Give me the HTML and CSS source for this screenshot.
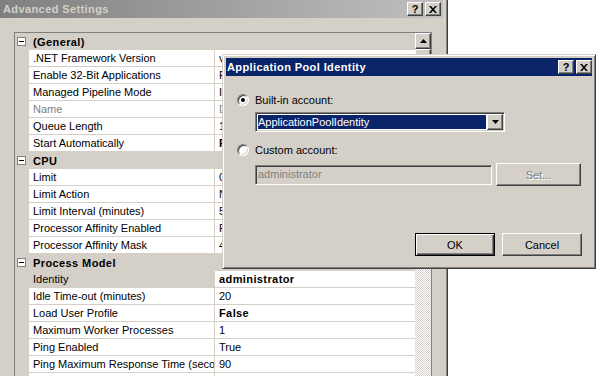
FILE: index.html
```html
<!DOCTYPE html>
<html lang="en">

<head>
    <meta charset="UTF-8">
    <title>Advanced Settings</title>
    <link rel="stylesheet" href="styles.css">
</head>

<body>
    <div class="adv">
        <div class="caption inactive">
            <span class="caption-text">Advanced Settings</span>
            <div class="caption-btns">
                <span class="cbtn">?</span>
                <span class="cbtn">
                    <svg width="8" height="7" viewBox="0 0 8 7"><path d="M0 0h2l2 2.2L6 0h2L5 3.5 8 7H6L4 4.8 2 7H0l3-3.5z" fill="#000"/></svg>
                </span>
            </div>
        </div>
        <div class="adv-body">
            <div class="grid">
                <div class="rows">
                    <div class="row cat"><span class="gutter"><span class="expander"></span></span><span class="name">(General)</span></div>
                    <div class="row"><span class="gutter"></span><span class="name">.NET Framework Version</span><span class="value">v4.0</span></div>
                    <div class="row"><span class="gutter"></span><span class="name">Enable 32-Bit Applications</span><span class="value">False</span></div>
                    <div class="row"><span class="gutter"></span><span class="name">Managed Pipeline Mode</span><span class="value">Integrated</span></div>
                    <div class="row"><span class="gutter"></span><span class="name ro">Name</span><span class="value ro">DefaultAppPool</span></div>
                    <div class="row"><span class="gutter"></span><span class="name">Queue Length</span><span class="value">1000</span></div>
                    <div class="row"><span class="gutter"></span><span class="name">Start Automatically</span><span class="value changed">False</span></div>

                    <div class="row cat"><span class="gutter"><span class="expander"></span></span><span class="name">CPU</span></div>
                    <div class="row"><span class="gutter"></span><span class="name">Limit</span><span class="value">0</span></div>
                    <div class="row"><span class="gutter"></span><span class="name">Limit Action</span><span class="value">NoAction</span></div>
                    <div class="row"><span class="gutter"></span><span class="name">Limit Interval (minutes)</span><span class="value">5</span></div>
                    <div class="row"><span class="gutter"></span><span class="name">Processor Affinity Enabled</span><span class="value">False</span></div>
                    <div class="row"><span class="gutter"></span><span class="name">Processor Affinity Mask</span><span class="value">4294967295</span></div>

                    <div class="row cat"><span class="gutter"><span class="expander"></span></span><span class="name">Process Model</span></div>
                    <div class="row sel"><span class="gutter"></span><span class="name">Identity</span><span class="value changed">administrator</span></div>
                    <div class="row"><span class="gutter"></span><span class="name">Idle Time-out (minutes)</span><span class="value">20</span></div>
                    <div class="row"><span class="gutter"></span><span class="name">Load User Profile</span><span class="value changed">False</span></div>
                    <div class="row"><span class="gutter"></span><span class="name">Maximum Worker Processes</span><span class="value">1</span></div>
                    <div class="row"><span class="gutter"></span><span class="name">Ping Enabled</span><span class="value">True</span></div>
                    <div class="row"><span class="gutter"></span><span class="name">Ping Maximum Response Time (seconds)</span><span class="value">90</span></div>
                    <div class="row"><span class="gutter"></span><span class="name"></span><span class="value"></span></div>
                </div>
                <div class="vscroll">
                    <span class="sbtn">
                        <svg width="7" height="4" viewBox="0 0 7 4"><path d="M0 4h7L3.5 0z" fill="#000"/></svg>
                    </span>
                    <span class="thumb"></span>
                </div>
            </div>
        </div>
    </div>

    <div class="dialog">
        <div class="caption active">
            <span class="caption-text">Application Pool Identity</span>
            <div class="caption-btns">
                <span class="cbtn">?</span>
                <span class="cbtn">
                    <svg width="8" height="7" viewBox="0 0 8 7"><path d="M0 0h2l2 2.2L6 0h2L5 3.5 8 7H6L4 4.8 2 7H0l3-3.5z" fill="#000"/></svg>
                </span>
            </div>
        </div>
        <div class="dialog-body">
            <div class="opt">
                <span class="radio on"></span>
                <span>Built-in account:</span>
            </div>
            <div class="combo">
                <span class="combo-sel">ApplicationPoolIdentity</span>
                <span class="dropbtn">
                    <svg width="7" height="4" viewBox="0 0 7 4"><path d="M0 0h7L3.5 4z" fill="#000"/></svg>
                </span>
            </div>
            <div class="opt second">
                <span class="radio"></span>
                <span>Custom account:</span>
            </div>
            <div class="custom">
                <span class="textbox">administrator</span>
                <span class="btn set disabled">Set...</span>
            </div>
            <div class="actions">
                <span class="btn default">OK</span>
                <span class="btn">Cancel</span>
            </div>
        </div>
    </div>
</body>

</html>
```

FILE: styles.css
```css
body {
    margin: 0;
    height: 376px;
    overflow: hidden;
    position: relative;
    background-color: #fff;
    font-family: "Liberation Sans", Arial, sans-serif;
    font-size: 11px;
    color: #000;
}

/* outer property window */
.adv {
    width: 447px;
    height: 376px;
    background-color: #d4d0c8;
    border-right: 1px solid #404040;
    box-shadow: inset -1px 0 #808080;
}

.caption {
    display: flex;
    align-items: center;
    justify-content: space-between;
    height: 18px;
    padding: 0 2px 0 3px;
}

.adv .caption {
    margin-right: 4px;
}

.caption.inactive {
    background: linear-gradient(to right, #808080, #c0c0c0);
    color: #d4d0c8;
}

.caption.active {
    background-color: #0a246a;
    color: #fff;
    padding: 0 0 0 1px;
}

.caption-text {
    font-weight: bold;
    letter-spacing: 0.4px;
    white-space: nowrap;
}

.caption-btns {
    display: flex;
    gap: 2px;
}

.cbtn {
    width: 16px;
    height: 14px;
    box-sizing: border-box;
    display: flex;
    align-items: center;
    justify-content: center;
    background-color: #d4d0c8;
    color: #000;
    font-weight: bold;
    font-size: 11px;
    border: 1px solid;
    border-color: #fff #404040 #404040 #fff;
    box-shadow: inset -1px -1px #808080;
}

.adv-body {
    padding: 14px 0 0 14px;
}

/* property grid */
.grid {
    display: flex;
    width: 416px;
    height: 360px;
    overflow: hidden;
    border: 1px solid #808080;
}

.rows {
    width: 400px;
}

.row {
    display: flex;
    height: 17px;
}

.gutter {
    width: 14px;
    flex: none;
    box-sizing: border-box;
    padding-left: 2px;
    display: flex;
    align-items: center;
    background-color: #d4d0c8;
}

.expander {
    width: 9px;
    height: 9px;
    box-sizing: border-box;
    border: 1px solid #808080;
    background-color: #fff;
    display: flex;
    align-items: center;
    justify-content: center;
}

.expander::after {
    content: "";
    width: 5px;
    height: 1px;
    background-color: #000;
}

.name,
.value {
    box-sizing: border-box;
    padding-left: 4px;
    padding-top: 1px;
    line-height: 15px;
    white-space: nowrap;
    overflow: hidden;
    background-color: #fff;
    border-bottom: 1px solid #d4d0c8;
}

.name {
    width: 186px;
    flex: none;
    border-right: 1px solid #d4d0c8;
}

.value {
    flex: 1;
}

.ro {
    color: #808080;
}

.changed {
    font-weight: bold;
    letter-spacing: 0.4px;
}

.row.sel .name {
    background-color: #d4d0c8;
}

.row.cat .name {
    flex: 1;
    border: none;
    line-height: 16px;
    background-color: #d4d0c8;
    font-weight: bold;
    letter-spacing: 0.4px;
}

.vscroll {
    width: 16px;
    flex: none;
    display: flex;
    flex-direction: column;
    background: repeating-conic-gradient(#fff 0 25%, #d4d0c8 0 50%) 0 0 / 2px 2px;
}

.sbtn,
.thumb,
.dropbtn,
.btn {
    box-sizing: border-box;
    background-color: #d4d0c8;
    border: 1px solid;
    border-color: #fff #404040 #404040 #fff;
    box-shadow: inset -1px -1px #808080;
}

.sbtn {
    height: 16px;
    display: flex;
    align-items: center;
    justify-content: center;
}

.thumb {
    height: 150px;
}

/* identity dialog */
.dialog {
    position: absolute;
    left: 222px;
    top: 54px;
    width: 374px;
    height: 215px;
    box-sizing: border-box;
    padding: 3px;
    background-color: #d4d0c8;
    border: 1px solid;
    border-color: #d4d0c8 #404040 #404040 #d4d0c8;
    box-shadow: inset 1px 1px #fff, inset -1px -1px #808080;
}

.dialog-body {
    padding: 17px 10px 0 11px;
}

.opt {
    display: flex;
    align-items: center;
    gap: 6px;
    height: 14px;
}

.opt.second {
    margin-top: 11px;
}

.radio {
    width: 12px;
    height: 12px;
    box-sizing: border-box;
    border-radius: 50%;
    background-color: #fff;
    border: 1px solid;
    border-color: #808080 #fff #fff #808080;
    box-shadow: inset 1px 1px #404040, inset -1px -1px #d4d0c8;
    display: flex;
    align-items: center;
    justify-content: center;
}

.radio.on::after {
    content: "";
    width: 4px;
    height: 4px;
    border-radius: 50%;
    background-color: #000;
}

.combo,
.textbox {
    box-sizing: border-box;
    height: 20px;
    border: 1px solid;
    border-color: #808080 #fff #fff #808080;
    box-shadow: inset 1px 1px #404040, inset -1px -1px #d4d0c8;
}

.combo {
    display: flex;
    width: 250px;
    margin: 5px 0 0 18px;
    padding: 1px;
    background-color: #fff;
}

.combo-sel {
    flex: 1;
    margin: 1px;
    line-height: 14px;
    background-color: #0a246a;
    color: #fff;
}

.dropbtn {
    width: 16px;
    height: 16px;
    display: flex;
    align-items: center;
    justify-content: center;
}

.custom {
    display: flex;
    align-items: center;
    gap: 4px;
    height: 23px;
    margin: 6px 0 0 18px;
}

.textbox {
    width: 237px;
    padding-left: 2px;
    line-height: 16px;
    background-color: #d4d0c8;
    color: #808080;
}

.btn {
    width: 80px;
    height: 23px;
    display: flex;
    align-items: center;
    justify-content: center;
}

.btn.set {
    width: 85px;
}

.btn.disabled {
    color: #808080;
    text-shadow: 1px 1px #fff;
}

.btn.default {
    border-color: #000;
    box-shadow: inset 1px 1px #fff, inset -1px -1px #404040, inset -2px -2px #808080;
}

.actions {
    display: flex;
    justify-content: flex-end;
    gap: 7px;
    margin-top: 47px;
}
```
